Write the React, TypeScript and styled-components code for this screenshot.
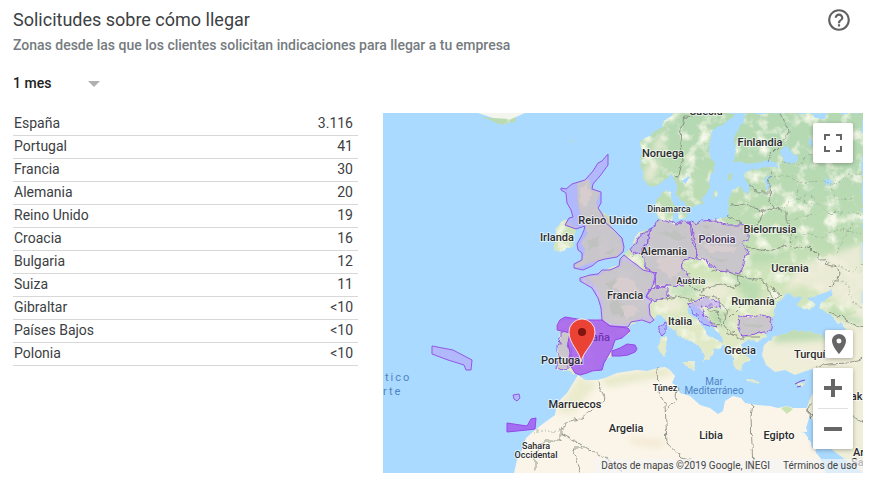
import React from 'react';
import styled, { createGlobalStyle, css } from 'styled-components';
import { MdHelpOutline, MdPlace } from 'react-icons/md';

const GlobalStyle = createGlobalStyle`
  *, *::before, *::after { box-sizing: border-box; }
  body {
    margin: 0;
    background: #fff;
    color: #3c4043;
    font-family: Roboto, sans-serif;
    font-size: 14px;
  }
`;

const Card = styled.main`
  padding: 8px 11px 0 13px;
`;

const Header = styled.header`
  display: flex;
  justify-content: space-between;
  align-items: flex-start;
`;

const Title = styled.h1`
  margin: 0;
  font-size: 18px;
  line-height: 24px;
  font-weight: 400;
  color: #3c4043;
`;

const Subtitle = styled.p`
  margin: 4px 0 0;
  line-height: 18px;
  font-weight: 500;
  color: #757b80;
`;

const HelpButton = styled.button`
  display: flex;
  padding: 0;
  border: 0;
  background: none;
  color: #616161;
  font-size: 26px;
  margin: -1px 11px 0 0;
`;

const Period = styled.label`
  display: inline-grid;
  grid-template-columns: 87px;
  align-items: center;
  margin: 20px 0 20px;
  > * { grid-area: 1 / 1; }
  svg { justify-self: end; pointer-events: none; }
`;

const PeriodSelect = styled.select`
  appearance: none;
  height: 19px;
  padding: 0;
  border: 0;
  background: none;
  color: #212121;
  font: 500 14px/19px Roboto, sans-serif;
`;

const Content = styled.div`
  display: grid;
  grid-template-columns: 345px minmax(0, 1fr);
  column-gap: 25px;
  align-items: start;
`;

const Table = styled.table`
  width: 100%;
  border-collapse: separate;
  border-spacing: 0;
`;

const cell = css`
  height: 23px;
  padding: 0 5px 2px 1px;
  border-bottom: 1px solid #d8d8d8;
  font-weight: 400;
  line-height: 20px;
`;
const Country = styled.th`
  ${cell}
  text-align: left;
`;
const Count = styled.td`
  ${cell}
  text-align: right;
`;

const MapFrame = styled.section`
  position: relative;
  height: 360px;
  overflow: hidden;
  background: #aadaff;
`;

const MapDrawing = styled.svg`
  display: block;
  width: 100%;
  height: 100%;
`;

const Controls = styled.div<{ $edge: 'top' | 'bottom' }>`
  position: absolute;
  right: 10px;
  ${(p) => (p.$edge === 'top' ? 'top: 10px;' : 'bottom: 24px;')}
  display: flex;
  flex-direction: column;
  align-items: flex-end;
  gap: 10px;
`;

const ControlButton = styled.button<{ $size: number; $flat?: boolean }>`
  display: flex;
  align-items: center;
  justify-content: center;
  width: ${(p) => p.$size}px;
  height: ${(p) => p.$size}px;
  padding: 0;
  border: 0;
  border-radius: 2px;
  background: #fff;
  color: #666;
  box-shadow: ${(p) => (p.$flat ? 'none' : '0 1px 4px rgba(0, 0, 0, 0.3)')};
`;

const ZoomGroup = styled.div`
  display: flex;
  flex-direction: column;
  border-radius: 2px;
  background: #fff;
  box-shadow: 0 1px 4px rgba(0, 0, 0, 0.3);
`;

const Divider = styled.span`
  height: 1px;
  margin: 0 5px;
  background: #e0e0e0;
`;

const Attribution = styled.footer`
  position: absolute;
  right: 0;
  bottom: 0;
  display: flex;
  gap: 13px;
  padding: 0 6px;
  background: rgba(245, 245, 245, 0.7);
  color: #444;
  font-size: 10px;
  line-height: 14px;
  a { color: inherit; text-decoration: none; }
`;

const requests: [string, string][] = [
  ['España', '3.116'],
  ['Portugal', '41'],
  ['Francia', '30'],
  ['Alemania', '20'],
  ['Reino Unido', '19'],
  ['Croacia', '16'],
  ['Bulgaria', '12'],
  ['Suiza', '11'],
  ['Gibraltar', '<10'],
  ['Países Bajos', '<10'],
  ['Polonia', '<10'],
];

const northLand = [
  'M98 5L105 4 109 0H142L133 4 130 8 120 12 109 7Z',
  'M290 0L289 4 280 8 279 14 269 18 266 23 257 28 260 36 257 44 259 55 260 66 267 74 277 72 284 66 290 62 293 70 293 80 299 90 304 97 312 93 321 90 320 84 325 77 327 63 333 52 327 43 327 30 329 17 340 10 349 3 352 0Z',
];

const europe =
  'M366 0L357 13 350 27 352 38 350 47 362 50 375 49 384 47 394 49 395 54 380 54 367 57 361 61 362 66 367 73 364 82 358 79 356 74 350 77 347 90 347 103 341 105 330 107 320 111 307 110 300 108 291 110 288 107 289 101 293 95 289 91 288 80 283 78 274 87 273 98 276 107 269 116 258 119 252 126 247 138 238 144 235 152 227 155 220 157 217 162 209 165 204 162 197 165 200 169 210 174 215 183 219 194 219 207 207 208 192 206 178 205 174 210 174 217 178 219 176 232 174 246 175 257 184 257 191 262 197 262 205 258 216 257 221 247 229 242 230 231 236 225 247 219 246 213 253 209 262 208 268 209 274 201 279 203 287 215 296 223 308 230 316 235 323 243 320 249 326 247 331 240 329 234 337 235 340 230 329 225 320 215 314 206 305 199 304 192 311 190 317 198 323 207 331 214 339 221 340 230 344 237 349 246 352 256 359 258 361 249 367 246 361 239 359 231 370 227 374 229 380 225 389 223 395 217 416 206 480 200V0Z';

const anatolia =
  'M381 232L379 242 383 252 392 259 402 257 412 262 423 258 432 255 432 266 430 280 426 288 424 295 440 330 480 360V190L416 210 405 220 391 223Z';

const africa =
  'M131 360L134 347 139 337 143 325 152 317 161 310 172 302 174 290 184 280 192 267 195 262 202 267 214 267 222 265 234 260 254 257 264 258 275 255 282 254 287 257 292 263 289 270 294 273 297 280 307 283 317 292 327 295 335 301 340 298 342 288 350 283 358 285 362 290 374 292 387 293 395 295 404 293 410 295 424 295 427 302 423 315 430 330 442 350 445 360Z';

const greatBritain =
  'M194 70L207 67 208 76 217 80 213 90 215 96 224 104 229 115 237 125 240 136 234 143 218 147 207 149 195 155 191 153 201 145 202 136 198 130 205 121 202 112 197 100 195 88Z';
const ireland = 'M181 106L193 113 192 126 190 134 180 138 171 139 169 133 176 124 172 115Z';

const islands = [
  'M277 226L283 224 284 238 280 243 276 238Z',
  'M299 249L313 247 311 257 303 254Z',
  'M363 267L377 268 375 270 364 269Z',
  'M414 270L422 267 419 272 415 273Z',
  'M295 99L303 98 304 105 296 106Z',
  'M187 27L190 26 190 28 187 29Z',
  'M345 61L350 62 348 67 344 66Z',
  'M331 79L334 77 335 82 331 85Z',
];

const blackSea =
  'M392 195L390 204 386 214 382 221 387 227 404 218 420 217 442 223 457 222 464 217 454 208 444 200 437 195 440 189 447 184 449 178 430 183 425 187 433 192 425 196 416 194 413 190 420 186 410 183 403 182 396 189Z';

const redSea = 'M413 304L420 316 427 328 436 344 443 360H455L450 344 438 332 427 318 421 318Z';

const lakes = [
  'M400 35L408 36 415 44 413 50 404 51 398 42Z',
  'M430 0H445L442 6 433 4Z',
  'M442 64L450 69 446 73 440 69Z',
  'M384 64L388 61 386 74 384 77Z',
  'M426 22L431 30 426 35 424 28Z',
  'M299 68L306 62 304 72Z',
];

const borders = [
  'M310 5L301 4 298 15 297 31 299 47 296 64 290 63',
  'M398 0L402 10 407 18 399 30 389 40 385 49',
  'M388 58L386 72 387 87 389 94 397 97 404 98 404 108 410 116 407 130',
  'M366 74L375 79 386 79M347 92L362 91 374 95 380 99 389 94M380 99L377 108 370 112 365 120M346 103L358 109 358 114',
  'M364 134L377 137 390 138 403 132 416 135 425 132 433 140 444 150 453 153 456 160 455 168 446 175',
  'M328 159L338 156 353 162 368 166 380 168 391 177 398 183 389 187',
  'M307 160L302 170 318 179 330 172 341 171 350 175 357 171 354 162M317 182L334 184 344 196 341 213 350 220M324 196L336 200 338 212 330 210M356 196L347 205M344 219L355 224 377 224',
  'M380 168L387 180 390 188M267 154L274 157 300 158M268 180L277 187 298 183 311 188',
  'M216 269L218 277 222 285 216 292 206 298 200 306 190 307 178 315V328H160L153 337V357M178 320L230 350 240 360M198 360L190 335H202M275 255L276 280 282 291 284 330 298 345 316 350M294 273L293 285 282 299',
  'M370 291L368 304 370 360M427 290L426 306 432 300M440 282L454 272 460 282M450 290L480 310M424 296L428 303M446 199L469 210 480 214M432 255L445 251 465 250 480 245',
];

const dashedBorders = [
  'M391 64L404 62 420 70 436 67 452 72 466 62 480 60M397 97L407 89 425 82 438 92 448 101 466 98 480 104M398 48L417 53 426 41 442 38M407 130L425 120 440 125 454 116 480 121M418 70L412 85 430 90M455 153L470 160 480 150M453 140L460 127 470 110M150 318H178',
  'M448 72L452 86 470 87M405 108L420 103 434 101M450 168L466 172 470 190 480 195',
];

const strongRegions = [
  'M174 217V212L177 207 182 204 188 205 200 207 219 207 227 213 245 215 247 218 239 225 232 227 229 236 225 243 221 250 219 257 209 258 204 260 197 262 192 260 189 255 185 250 187 240 185 230 187 220 179 218Z',
  'M229 238L237 235 244 231 252 232 254 236 252 239 245 242 237 243 229 243Z',
  'M124 310L144 313 148 306 153 305 152 316 144 317 124 319Z',
];

const softRegions = [
  'M225 41L225 52 217 63 210 71 209 76 218 79 218 90 215 95 219 101 223 110 230 116 239 125 241 134 240 139 234 144 222 146 215 148 209 153 200 157 191 155 191 151 199 147 199 140 195 137 194 131 198 124 201 117 202 113 193 116 182 112 186 105 190 104 188 97 184 90 183 80 178 77 178 75 183 76 189 71 202 67 210 58 215 50 219 48Z',
  'M241 142L237 146 236 153 227 157 219 157 215 161 207 162 197 165 197 168 209 175 215 185 218 195 219 207 227 213 245 214 248 209 259 207 267 210 271 207 267 202 266 192 269 188 263 184 267 178 270 172 273 160 260 157 254 152 247 147Z',
  'M276 213L282 210 282 220 279 223 276 219Z',
  'M178 218L187 219 185 230 187 240 185 250 185 255 179 257 174 255 175 243 175 233 178 224Z',
  'M275 107L284 108 292 112 302 107 309 112 310 122 312 127 314 145 299 148 300 157 307 165 300 173 288 172 272 173 273 160 262 155 262 145 259 140 264 132 266 121 269 117Z',
  'M269 117L262 120 255 123 253 128 247 137 250 142 259 140 264 132 266 121Z',
  'M307 108L314 111 319 108 332 107 344 112 359 112 364 117 364 127 360 130 364 140 359 153 357 161 344 158 332 157 324 148 314 143 309 127Z',
  'M267 177L273 173 285 175 285 180 287 183 280 185 275 187 269 188 263 184Z',
  'M317 188L322 183 327 187 337 188 337 195 327 193 317 194 322 203 334 214 320 210 312 200 304 191Z',
  'M356 202L359 204 369 205 380 202 390 205 389 210 387 218 377 220 367 222 359 223 357 217 355 212Z',
  'M49 233L70 237 89 247 88 257 83 257 81 252 65 247 49 241Z',
  'M130 282L136 281 137 285 134 288 131 286Z',
];

const lowlands = [
  'M262 57L270 48 277 50 273 60 268 70 262 67Z',
  'M272 30L282 18 280 36 270 42Z',
  'M414 152L440 145 480 130V200L445 183 420 172 402 178Z',
  'M322 168L345 172 350 180 335 190 322 184Z',
  'M270 189L292 186 302 190 298 197 284 199Z',
  'M396 236L440 235 470 245 470 260 430 254 405 252Z',
  'M375 185L390 190 388 200 373 201Z',
];
const forests = [
  'M345 158L362 163 378 172 376 190 362 187 356 174Z',
  'M440 190L460 200 480 206V213L455 206Z',
  'M322 197L340 198 346 214 330 212Z',
  'M288 174L318 171 317 180 300 184 288 180Z',
  'M366 140L400 137 412 139 385 148 366 150Z',
  'M395 212L425 215 460 225 430 228 390 230Z',
];

type MapLabel = { text: string; x: number; y: number; size?: number; anchor?: 'start' | 'middle'; fill?: string };
const labels: MapLabel[] = [
  { text: 'Suecia', x: 323, y: 2 },
  { text: 'Noruega', x: 280, y: 44 },
  { text: 'Finlandia', x: 377, y: 33 },
  { text: 'Dinamarca', x: 286, y: 99, size: 9 },
  { text: 'Reino Unido', x: 225, y: 111 },
  { text: 'Irlanda', x: 174, y: 128 },
  { text: 'Alemania', x: 281, y: 142 },
  { text: 'Polonia', x: 334, y: 130, fill: '#44305a' },
  { text: 'Bielorrusia', x: 387, y: 120 },
  { text: 'Ucrania', x: 407, y: 159 },
  { text: 'Austria', x: 308, y: 171, size: 9 },
  { text: 'Rumanía', x: 370, y: 192 },
  { text: 'Francia', x: 242, y: 186 },
  { text: 'Italia', x: 297, y: 212 },
  { text: 'Grecia', x: 357, y: 241 },
  { text: 'Turquía', x: 411, y: 245, anchor: 'start' },
  { text: 'Portugal', x: 179, y: 251 },
  { text: 'Túnez', x: 282, y: 278, size: 9 },
  { text: 'Marruecos', x: 192, y: 295 },
  { text: 'Argelia', x: 243, y: 319 },
  { text: 'Libia', x: 328, y: 326 },
  { text: 'Egipto', x: 396, y: 326 },
  { text: 'Sahara', x: 153, y: 336, size: 9 },
  { text: 'Occidental', x: 153, y: 345, size: 9 },
  { text: 'Irak', x: 461, y: 287, anchor: 'start' },
  { text: 'Arabia', x: 470, y: 343, anchor: 'start' },
  { text: 'Saudí', x: 468, y: 353, anchor: 'start' },
];

const Paths = ({ d }: { d: string[] }) => (
  <>
    {d.map((path) => (
      <path key={path} d={path} />
    ))}
  </>
);

function EuropeMap() {
  return (
    <MapDrawing viewBox="0 0 480 360" preserveAspectRatio="xMidYMid slice" role="img" aria-label="Mapa de solicitudes por país">
      <defs>
        <filter id="terrain" filterUnits="userSpaceOnUse" x="0" y="0" width="480" height="360">
          <feTurbulence type="fractalNoise" baseFrequency="0.07" numOctaves="4" seed="8" result="noise" />
          <feDisplacementMap in="SourceGraphic" in2="noise" scale="7" xChannelSelector="G" yChannelSelector="B" result="land" />
          <feColorMatrix in="noise" values="0 0 0 0 0.93  0 0 0 0 0.95  0 0 0 0 0.82  3 0 0 0 -1.5" />
          <feComposite in2="land" operator="in" result="spots" />
          <feMerge>
            <feMergeNode in="land" />
            <feMergeNode in="spots" />
          </feMerge>
        </filter>
        <filter id="jagged" filterUnits="userSpaceOnUse" x="0" y="0" width="480" height="360">
          <feTurbulence type="fractalNoise" baseFrequency="0.14" numOctaves="2" seed="3" />
          <feDisplacementMap in="SourceGraphic" scale="7" xChannelSelector="R" yChannelSelector="G" />
        </filter>
        <filter id="soft">
          <feGaussianBlur stdDeviation="3" />
        </filter>
        <linearGradient id="climate" gradientUnits="userSpaceOnUse" x1="400" y1="40" x2="350" y2="250">
          <stop offset="0" stopColor="#b5d9b3" />
          <stop offset="0.35" stopColor="#bddcb3" />
          <stop offset="0.6" stopColor="#d0e4ba" />
          <stop offset="1" stopColor="#e4eac9" />
        </linearGradient>
        <clipPath id="mainland">
          <path d={europe} />
          <path d={anatolia} />
          <path d={northLand[1]} />
        </clipPath>
        <clipPath id="maghreb">
          <path d={africa} />
        </clipPath>
      </defs>

      <rect width="480" height="360" fill="#aadaff" />
      <path d={africa} fill="#faf5e8" />
      <g clipPath="url(#maghreb)">
        <g filter="url(#soft)" opacity="0.8">
          <path d="M173 300L195 263 215 270 190 300Z" fill="#e6e8c6" />
          <path d="M216 264L290 254 288 262 225 274Z" fill="#e3e6c2" />
          <path d="M246 325L284 328 275 334 250 330Z" fill="#f0e2c8" />
        </g>
        <path d="M398 295L404 293 410 296 404 301Z" fill="#c9e3b1" />
      </g>
      <path d={anatolia} fill="#efeed8" />
      <g filter="url(#terrain)" fill="url(#climate)">
        <path d={europe} />
        <Paths d={northLand} />
        <path d={ireland} />
        <path d={greatBritain} />
        <Paths d={islands} />
      </g>
      <g clipPath="url(#mainland)">
        <g filter="url(#soft)">
          <g fill="#f0eedb" opacity="0.85"><Paths d={lowlands} /></g>
          <g fill="#b5d9ad" opacity="0.8"><Paths d={forests} /></g>
        </g>
      </g>
      <path d="M95 0H142L133 4 128 6 110 5Z" fill="#f4f5ef" />
      <g fill="#aadaff" filter="url(#jagged)">
        <path d={blackSea} />
        <path d={redSea} />
        <Paths d={lakes} />
      </g>
      <g filter="url(#jagged)" fill="none">
        <g stroke="#7c8277" strokeWidth="0.8" strokeLinejoin="round"><Paths d={borders} /></g>
        <g stroke="#8fa88c" strokeWidth="0.7" strokeDasharray="2 2"><Paths d={dashedBorders} /></g>
      </g>

      <g fill="#b79cf8" fillOpacity="0.55"><Paths d={softRegions} /></g>
      <g fill="#cac8c8" fillOpacity="0.85">
        <path d={greatBritain} />
        <path d="M240 147L238 155 225 157 216 163 204 163 211 171 219 183 221 196 220 206 230 211 244 211 258 204 265 204 264 190 261 184 268 173 270 162 256 156Z" />
        <Paths d={[softRegions[3], softRegions[4], softRegions[6], softRegions[7], softRegions[9]]} />
      </g>
      <g filter="url(#jagged)">
        <g fill="#b9c0b8" opacity="0.6">
          <path d="M225 190L235 185 242 195 239 205 227 199Z" />
          <path d="M276 120L292 117 303 125 295 127 284 124ZM222 170L232 164 230 176Z" />
          <path d="M320 123L333 121 329 125ZM342 134L358 131 352 136ZM322 143L345 146 340 149ZM318 112L326 112 322 116Z" />
          <path d="M358 210L382 212 377 215 360 213ZM205 127L217 124 213 133 206 137ZM218 139L230 136 226 142Z" />
        </g>
        <g fill="#dccfcf" opacity="0.75">
          <path d="M196 76L205 70 208 82 202 94 196 88Z" />
          <path d="M233 165L250 166 257 178 248 182 231 175ZM237 193L252 192 256 199 244 206Z" />
          <path d="M275 145L295 143 302 154 288 166 276 156ZM319 132L355 134 352 139 325 139Z" />
        </g>
      </g>
      <g fill="none" stroke="#9257e6" strokeWidth="1" strokeLinejoin="round">
        <Paths d={[softRegions[0], softRegions[1], softRegions[10], softRegions[11]]} />
        <g filter="url(#jagged)"><Paths d={softRegions.slice(2, 10)} /></g>
      </g>
      <g fill="#a25cf0" fillOpacity="0.85" stroke="#9548e8" strokeWidth="1"><Paths d={strongRegions} /></g>
      <path d="M412 271L418 268 422 267M414 274L418 273" stroke="#7646d8" strokeWidth="1" fill="none" />

      <g fontFamily="Roboto, sans-serif">
        <text x="191" y="228" fontSize="11" fontWeight="500" fill="#6f33b4">España</text>
        <g fontWeight="500" stroke="#fff" strokeOpacity="0.6" strokeWidth="2" strokeLinejoin="round" paintOrder="stroke">
          {labels.map((l) => (
            <text key={l.text} x={l.x} y={l.y} fontSize={l.size ?? 11} textAnchor={l.anchor ?? 'middle'} fill={l.fill ?? '#2c2c2c'}>
              {l.text}
            </text>
          ))}
        </g>
        <g fontSize="10" fill="#4f84c4">
          <text x="331" y="272" textAnchor="middle">Mar</text>
          <text x="331" y="281" textAnchor="middle">Mediterráneo</text>
          <text x="2" y="268" fontSize="11" letterSpacing="2">tico</text>
          <text x="0" y="282" fontSize="11" letterSpacing="2">rte</text>
        </g>
      </g>

      <path d="M198 249C197 238 186 231 186 219A13 13 0 0 1 212 219C212 231 200 238 198 249Z" fill="#ea4335" stroke="#fff" strokeWidth="0.8" />
      <circle cx="199" cy="219" r="4" fill="#811411" />
    </MapDrawing>
  );
}

export default function App() {
  return (
    <>
      <GlobalStyle />
      <Card>
        <Header>
          <div>
            <Title>Solicitudes sobre cómo llegar</Title>
            <Subtitle>Zonas desde las que los clientes solicitan indicaciones para llegar a tu empresa</Subtitle>
          </div>
          <HelpButton type="button" aria-label="Ayuda">
            <MdHelpOutline />
          </HelpButton>
        </Header>
        <Period>
          <PeriodSelect aria-label="Periodo" defaultValue="1">
            <option value="1">1 mes</option>
          </PeriodSelect>
          <svg width="12" height="6" viewBox="0 0 12 6" aria-hidden="true">
            <path d="M0 0H12L6 6Z" fill="#b0b0b0" />
          </svg>
        </Period>
        <Content>
          <Table aria-label="Solicitudes por país">
            <tbody>
              {requests.map(([country, count]) => (
                <tr key={country}>
                  <Country scope="row">{country}</Country>
                  <Count>{count}</Count>
                </tr>
              ))}
            </tbody>
          </Table>
          <MapFrame aria-label="Mapa">
            <EuropeMap />
            <Attribution>
              <span>Datos de mapas ©2019 Google, INEGI</span>
              <a href="#terminos">Términos de uso</a>
            </Attribution>
            <Controls $edge="top">
              <ControlButton type="button" $size={40} aria-label="Pantalla completa">
                <svg width="18" height="18" viewBox="0 0 18 18" aria-hidden="true">
                  <path d="M0 0H6V2H2V6H0ZM12 0H18V6H16V2H12ZM0 12H2V16H6V18H0ZM16 12H18V18H12V16H16Z" fill="currentColor" />
                </svg>
              </ControlButton>
            </Controls>
            <Controls $edge="bottom">
              <ControlButton type="button" $size={28} aria-label="Mostrar ubicación">
                <MdPlace size={24} />
              </ControlButton>
              <ZoomGroup>
                <ControlButton type="button" $size={40} $flat aria-label="Acercar">
                  <svg width="18" height="18" viewBox="0 0 18 18" aria-hidden="true">
                    <path d="M7 0H11V7H18V11H11V18H7V11H0V7H7Z" fill="currentColor" />
                  </svg>
                </ControlButton>
                <Divider />
                <ControlButton type="button" $size={40} $flat aria-label="Alejar">
                  <svg width="18" height="18" viewBox="0 0 18 18" aria-hidden="true">
                    <path d="M0 7H18V11H0Z" fill="currentColor" />
                  </svg>
                </ControlButton>
              </ZoomGroup>
            </Controls>
          </MapFrame>
        </Content>
      </Card>
    </>
  );
}
